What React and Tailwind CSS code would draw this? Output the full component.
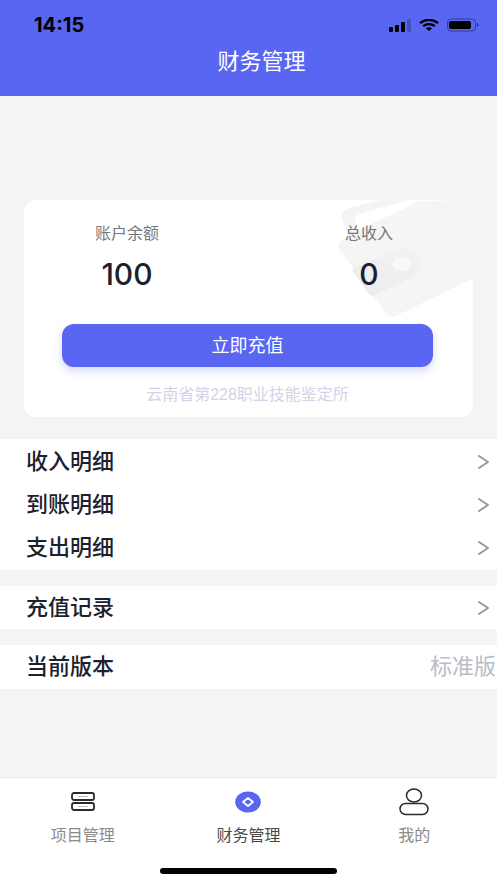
import React from "react";

function StatusIcons() {
  return (
    <div className="flex items-center gap-2">
      <svg width="22" height="13" viewBox="0 0 22 13" aria-hidden="true">
        <rect x="0" y="8" width="4" height="5" rx="1" fill="#000" />
        <rect x="6" y="6" width="4" height="7" rx="1" fill="#000" />
        <rect x="12" y="3" width="4" height="10" rx="1" fill="#000" />
        <rect x="18" y="0" width="4" height="13" rx="1" fill="#000" opacity="0.2" />
      </svg>
      <svg width="20" height="12" viewBox="0 0 20 12" aria-hidden="true">
        <path d="M1 4.2C6 -0.2 14 -0.2 19 4.2" fill="none" stroke="#000" strokeWidth="2.4" />
        <path d="M4.2 7.2C7.6 4.4 12.4 4.4 15.8 7.2" fill="none" stroke="#000" strokeWidth="2.2" />
        <path d="M6.9 9.3C8.7 7.8 11.3 7.8 13.1 9.3L10 12Z" fill="#000" />
      </svg>
      <svg width="32" height="14" viewBox="0 0 32 14" aria-hidden="true">
        <rect x="0.5" y="1" width="28" height="12" rx="3.5" fill="none" stroke="#000" strokeOpacity="0.4" />
        <rect x="2" y="3" width="22" height="8" rx="2" fill="#000" />
        <path d="M30 5C32 5.5 32 8.5 30 9Z" fill="#000" opacity="0.5" />
      </svg>
    </div>
  );
}

function WalletArt() {
  return (
    <svg
      className="absolute right-0 top-0"
      width="135"
      height="118"
      viewBox="0 0 135 118"
      aria-hidden="true"
    >
      <defs>
        <linearGradient id="strap" x1="0" y1="1" x2="1" y2="0">
          <stop offset="0" stopColor="#ececec" />
          <stop offset="1" stopColor="#f2f2f2" />
        </linearGradient>
      </defs>
      <path
        d="M12 40L4 19Q2 11 11 8L44 0H70L22 14Q16 16 17 20L19 26V40Z"
        fill="#f4f4f4"
      />
      <path
        d="M82 1L135 0V78L60 115Q52 119 47 112L1 49Q-1 44 4 40L12 34Z"
        fill="#f5f5f5"
      />
      <path
        d="M16 68L59 50C70 46 83 52 83 64C83 71 78 76 71 79L37 95Q33 97 30 93L15 72Q14 69 16 68Z"
        fill="url(#strap)"
      />
      <ellipse cx="64" cy="64" rx="9" ry="7" fill="#f8f8f8" />
    </svg>
  );
}

function Stat({ label, value }) {
  return (
    <div className="flex flex-col items-center">
      <dt className="text-base leading-6 text-[#777]">{label}</dt>
      <dd className="mt-2 font-['Inter'] text-[30px] font-medium leading-10 text-[#1c212e]">{value}</dd>
    </div>
  );
}

function LinkRow({ label }) {
  return (
    <li>
      <a href="#" className="flex h-[43px] items-center justify-between pl-[26px] pr-2">
        <span className="text-[22px] font-medium leading-8">{label}</span>
        <svg width="11" height="14" viewBox="0 0 11 14" aria-hidden="true">
          <path d="M1 1L10 7L1 13" fill="none" stroke="#999" strokeWidth="2" strokeLinecap="round" strokeLinejoin="round" />
        </svg>
      </a>
    </li>
  );
}

function ProjectIcon() {
  return (
    <svg width="30" height="28" viewBox="0 0 30 28" aria-hidden="true">
      <g fill="none" stroke="#2b2b2b" strokeWidth="1.8">
        <rect x="4" y="5" width="22" height="7" rx="2" />
        <rect x="4" y="15" width="22" height="7" rx="2" />
      </g>
      <path d="M10 8.5h10M10 18.5h10" stroke="#bbb" />
    </svg>
  );
}

function FinanceIcon() {
  return (
    <svg width="30" height="28" viewBox="0 0 30 28" aria-hidden="true">
      <ellipse cx="15" cy="14" rx="12.8" ry="10.5" fill="#5866f2" />
      <path d="M15 10L20 14L15 18L10 14Z" fill="none" stroke="#fff" strokeWidth="1.8" strokeLinejoin="round" />
    </svg>
  );
}

function ProfileIcon() {
  return (
    <svg width="30" height="28" viewBox="0 0 30 28" aria-hidden="true">
      <g fill="none" stroke="#2b2b2b" strokeWidth="1.5">
        <ellipse cx="15" cy="7.500" rx="7.5" ry="6.5" />
        <rect x="1" y="15.5" width="28" height="11" rx="5.5" />
      </g>
    </svg>
  );
}

const tabs = [
  { label: "项目管理", Icon: ProjectIcon, active: false },
  { label: "财务管理", Icon: FinanceIcon, active: true },
  { label: "我的", Icon: ProfileIcon, active: false },
];

export default function App() {
  return (
    <div className="flex min-h-screen flex-col bg-[#f4f4f4] font-['Liberation_Sans','Noto_Sans_CJK_SC',sans-serif] text-[#1c212e]">
      <header className="h-24 bg-[#5866f2]">
        <div className="flex h-12 items-center justify-between pl-[34px] pr-[18px] pt-[2px]">
          <time className="font-['Inter'] text-[20px] font-bold leading-6 text-black">14:15</time>
          <StatusIcons />
        </div>
        <h1 className="pl-[26px] text-center text-[22px] font-normal leading-7 text-white">财务管理</h1>
      </header>

      <main className="flex-1 pt-[104px]">
        <section className="relative mx-6 overflow-hidden rounded-xl bg-white pb-[10px] pl-[38px] pr-10 pt-[22px]">
          <WalletArt />
          <dl className="relative flex justify-between pl-[33px] pr-10">
            <Stat label="账户余额" value="100" />
            <Stat label="总收入" value="0" />
          </dl>
          <button
            type="button"
            className="relative mt-[30px] h-[43px] w-full rounded-xl bg-[#5866f2] text-lg text-white shadow-[0_4px_8px_rgba(88,102,242,0.25)]"
          >
            立即充值
          </button>
          <p className="mt-4 text-center text-base leading-6 text-[#d3d3e8]">云南省第228职业技能鉴定所</p>
        </section>

        <ul className="mt-[22px] bg-white py-px">
          <LinkRow label="收入明细" />
          <LinkRow label="到账明细" />
          <LinkRow label="支出明细" />
        </ul>
        <ul className="mt-4 bg-white">
          <LinkRow label="充值记录" />
        </ul>
        <div className="mt-4 flex h-11 items-center justify-between bg-white pl-[26px] pr-px text-[22px] leading-8">
          <span className="font-medium">当前版本</span>
          <span className="text-[#b9bdc6]">标准版</span>
        </div>
      </main>

      <footer className="border-t border-[#e8e8e8] bg-white pb-[9px]">
        <nav className="grid grid-cols-3 pt-[10px]">
          {tabs.map(({ label, Icon, active }) => (
            <a
              key={label}
              href="#"
              aria-current={active ? "page" : undefined}
              className={
                active
                  ? "flex flex-col items-center gap-2 text-base leading-6 text-[#4a4a4a]"
                  : "flex flex-col items-center gap-2 text-base leading-6 text-[#8a8a8a]"
              }
            >
              <Icon />
              <span>{label}</span>
            </a>
          ))}
        </nav>
        <div className="mx-auto mt-5 h-[6px] w-[177px] rounded-full bg-black" />
      </footer>
    </div>
  );
}
